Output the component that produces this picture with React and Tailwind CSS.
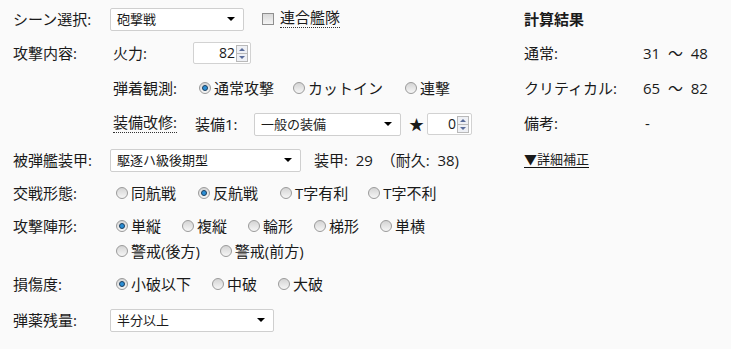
import React from 'react'

const font = { fontFamily: '"Open Sans", "Noto Sans CJK JP", "Noto Sans", sans-serif' }

function Radio({ checked, label, className = '' }) {
  return (
    <span className={`inline-flex items-center ${className}`}>
      <span className="flex h-[12px] w-[12px] items-center justify-center rounded-full border border-[#9a9a9a] bg-gradient-to-b from-[#d4d4d4] to-[#f6f6f6]">
        {checked ? (
          <span className="h-[6px] w-[6px] rounded-full border border-[#1d3f5e] bg-[#2b8fd6]" />
        ) : null}
      </span>
      <span className="ml-[3px]">{label}</span>
    </span>
  )
}

function Select({ value, width }) {
  return (
    <div
      className={`flex h-[23px] items-center justify-between rounded-[2px] border border-[#cfcfcf] bg-white pl-[6px] pr-[8px] text-[13px] ${width}`}
    >
      <span>{value}</span>
      <span className="h-0 w-0 border-x-[4px] border-t-[4px] border-x-transparent border-t-black" />
    </div>
  )
}

function Spin({ value, width }) {
  return (
    <div
      className={`flex h-[22px] items-center justify-end rounded-[2px] border border-[#d2d2d2] bg-white pr-[2px] text-[14px] ${width}`}
    >
      <span className="mr-[1px]">{value}</span>
      <span className="flex h-[17px] w-[12px] flex-col border border-[#b9b9b9] bg-[#eef0f5]">
        <span className="flex flex-1 items-center justify-center border-b border-[#b9b9b9]">
          <span className="h-0 w-0 border-x-[3px] border-b-[3px] border-x-transparent border-b-[#5a6c9a]" />
        </span>
        <span className="flex flex-1 items-center justify-center">
          <span className="h-0 w-0 border-x-[3px] border-t-[3px] border-x-transparent border-t-[#5a6c9a]" />
        </span>
      </span>
    </div>
  )
}

function Row({ label, h, children, className = '' }) {
  return (
    <div className={`flex items-center ${h} ${className}`}>
      <span className="w-[97px] shrink-0">{label}</span>
      {children}
    </div>
  )
}

export default function App() {
  return (
    <div
      className="flex h-[349px] w-[731px] bg-[#fafafa] pl-[13px] pt-[2px] text-[15px] leading-none text-[#1a1a1a]"
      style={font}
    >
      <div className="w-[511px] shrink-0">
        <Row label="シーン選択:" h="h-[34px]">
          <Select value="砲撃戦" width="w-[134px]" />
          <span className="ml-[18px] inline-flex items-center">
            <span className="h-[12px] w-[12px] border border-[#8f8f8f] bg-gradient-to-b from-[#d9d9d9] to-[#f4f4f4]" />
            <span className="ml-[6px] border-b border-dotted border-[#333] pb-[2px]">連合艦隊</span>
          </span>
        </Row>
        <Row label="攻撃内容:" h="h-[34px]">
          <span className="ml-[3px] w-[80px]">火力:</span>
          <Spin value="82" width="w-[58px]" />
        </Row>
        <div className="flex h-[36px] items-center pl-[100px]">
          <span className="w-[86px]">弾着観測:</span>
          <Radio checked label="通常攻撃" />
          <Radio label="カットイン" className="ml-[19px]" />
          <Radio label="連撃" className="ml-[22px]" />
        </div>
        <div className="flex h-[36px] items-center pl-[100px]">
          <span className="border-b border-dotted border-[#333] pb-[2px]">装備改修:</span>
          <span className="ml-[18px] w-[59px]">装備1:</span>
          <Select value="一般の装備" width="w-[147px]" />
          <span className="ml-[8px] text-[15px]">★</span>
          <span className="ml-[3px]">
            <Spin value="0" width="w-[45px]" />
          </span>
        </div>
        <Row label="被弾艦装甲:" h="h-[36px]">
          <Select value="駆逐ハ級後期型" width="w-[191px]" />
          <span className="ml-[13px] whitespace-pre">装甲:  29  （耐久:  38)</span>
        </Row>
        <Row label="交戦形態:" h="h-[30px]">
          <span className="ml-[6px] flex items-center">
            <Radio label="同航戦" />
            <Radio checked label="反航戦" className="ml-[22px]" />
            <Radio label="T字有利" className="ml-[22px]" />
            <Radio label="T字不利" className="ml-[20px]" />
          </span>
        </Row>
        <div className="flex h-[60px] pt-[5px]">
          <span className="flex h-[26px] w-[97px] shrink-0 items-center">攻撃陣形:</span>
          <div className="ml-[6px]">
            <div className="flex h-[26px] items-center">
              <Radio checked label="単縦" />
              <Radio label="複縦" className="ml-[21px]" />
              <Radio label="輪形" className="ml-[21px]" />
              <Radio label="梯形" className="ml-[21px]" />
              <Radio label="単横" className="ml-[21px]" />
            </div>
            <div className="flex h-[24px] items-center">
              <Radio label="警戒(後方)" />
              <Radio label="警戒(前方)" className="ml-[20px]" />
            </div>
          </div>
        </div>
        <Row label="損傷度:" h="h-[32px]">
          <span className="ml-[6px] flex items-center">
            <Radio checked label="小破以下" />
            <Radio label="中破" className="ml-[21px]" />
            <Radio label="大破" className="ml-[21px]" />
          </span>
        </Row>
        <Row label="弾薬残量:" h="h-[40px]">
          <Select value="半分以上" width="w-[164px]" />
        </Row>
      </div>
      <div className="flex flex-col">
        <div className="flex h-[34px] items-center font-bold">計算結果</div>
        <div className="flex h-[34px] items-center">
          <span className="w-[119px]">通常:</span>
          <span className="whitespace-pre">31  ～  48</span>
        </div>
        <div className="flex h-[36px] items-center">
          <span className="w-[119px]">クリティカル:</span>
          <span className="whitespace-pre">65  ～  82</span>
        </div>
        <div className="flex h-[34px] items-center">
          <span className="w-[121px]">備考:</span>
          <span>-</span>
        </div>
        <div className="flex h-[40px] items-center">
          <span className="border-b border-[#111] text-[13px] leading-[15px]">▼詳細補正</span>
        </div>
      </div>
    </div>
  )
}
